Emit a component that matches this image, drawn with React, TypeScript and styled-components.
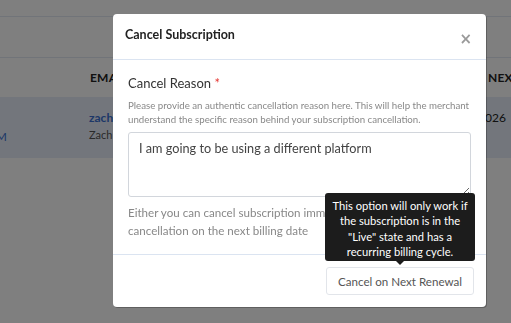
import React from 'react'
import styled, { createGlobalStyle } from 'styled-components'

const GlobalStyle = createGlobalStyle`
    html, body {
        margin: 0;
        padding: 0;
        width: 511px;
        height: 323px;
        overflow: hidden;
        background: #ffffff;
        font-family: Lato, "Open Sans", sans-serif;
    }
`

const Page = styled.div`
    width: 511px;
    height: 323px;
    overflow: hidden;
    display: flex;
    flex-direction: column;
`

const TopBar = styled.div`
    height: 16px;
    border-bottom: 1px solid #e3e9f2;
`

const Toolbar = styled.div`
    height: 40px;
    border-bottom: 1px solid #e3e9f2;
`

const Row = styled.div<{ $head?: boolean }>`
    display: grid;
    grid-template-columns: 150px 398px 200px;
    margin-left: -61px;
    height: ${p => p.$head ? '39px' : '61px'};
    align-items: ${p => p.$head ? 'center' : 'start'};
    background: ${p => p.$head ? '#ffffff' : '#e6edf8'};
`

const HeadCell = styled.div`
    font-size: 12px;
    font-weight: 700;
    color: #222;
    letter-spacing: 0.2px;
    padding-left: 1px;
`

const Cell = styled.div<{ $end?: string }>`
    padding-top: 13px;
    display: flex;
    flex-direction: column;
    gap: 3px;
    white-space: nowrap;
    align-items: ${p => p.$end ? 'flex-end' : 'flex-start'};
    width: ${p => p.$end ?? 'auto'};
`

const LinkText = styled.span<{ $plain?: boolean }>`
    font-size: 12px;
    font-weight: ${p => p.$plain ? 400 : 700};
    color: #3b6fd0;
`

const SubText = styled.span<{ $dark?: boolean }>`
    font-size: ${p => p.$dark ? '12px' : '11px'};
    color: ${p => p.$dark ? '#222' : '#555'};
`

const Overlay = styled.div`
    position: fixed;
    inset: 0;
    background: rgba(0, 0, 0, 0.5);
`

const Modal = styled.div`
    position: absolute;
    left: 113px;
    top: 14px;
    width: 373px;
    height: 293px;
    background: #fff;
    border-radius: 4px;
    box-shadow: 1px 1px 0 rgba(0, 0, 0, 0.25);
    display: flex;
    flex-direction: column;
`

const Header = styled.div`
    height: 45px;
    border-bottom: 1px solid #dbe4f1;
    display: flex;
    align-items: center;
    justify-content: space-between;
    padding: 0 14px 0 12px;
`

const Title = styled.h3`
    margin: 0 0 5px;
    font-size: 12.5px;
    font-weight: 700;
    color: #222;
`

const Close = styled.span`
    font-family: "DejaVu Sans", sans-serif;
    font-size: 15px;
    font-weight: 700;
    color: #9a9a9a;
    margin-top: 5px;
`

const Body = styled.div`
    padding: 14px 15px 0;
    flex: 1;
    border-bottom: 1px solid #dbe4f1;
`

const Label = styled.div`
    font-size: 13px;
    color: #333;
    line-height: 18px;
`

const Star = styled.span`
    color: #e53935;
`

const Help = styled.p`
    margin: 6px 0 6px;
    font-size: 9.7px;
    line-height: 14px;
    color: #888;
`

const Reason = styled.textarea`
    display: block;
    box-sizing: border-box;
    width: 343px;
    height: 65px;
    border: 1px solid #d2d6dc;
    border-radius: 3px;
    padding: 7px 10px;
    font-family: Lato, "Open Sans", sans-serif;
    font-size: 12.7px;
    color: #444;
    resize: vertical;
`

const Note = styled.p`
    margin: 7px 0 0;
    font-size: 11.6px;
    line-height: 18px;
    color: #888;
`

const Footer = styled.div`
    height: 52px;
    display: flex;
    justify-content: flex-end;
    align-items: flex-start;
    padding: 12px 12px 0;
    box-sizing: border-box;
`

const ButtonWrap = styled.div`
    position: relative;
    display: flex;
`

const Button = styled.button`
    height: 28px;
    padding: 0 11px;
    background: #fff;
    border: 1px solid #e2e5ea;
    border-radius: 3px;
    font-family: Lato, "Open Sans", sans-serif;
    font-size: 11.6px;
    color: #555;
`

const Tooltip = styled.div`
    position: absolute;
    bottom: calc(100% + 6px);
    left: 50%;
    transform: translateX(-50%);
    width: 150px;
    box-sizing: border-box;
    padding: 5px 6px 1px;
    background: #1c1c1c;
    border-radius: 3px;
    color: #fff;
    font-size: 11.2px;
    line-height: 15.6px;
    text-align: center;

    &::after {
        content: "";
        position: absolute;
        left: 50%;
        bottom: -4px;
        margin-left: -4px;
        border-left: 4px solid transparent;
        border-right: 4px solid transparent;
        border-top: 4px solid #1c1c1c;
    }
`

export default function App(): React.ReactElement {
    return <>
        <GlobalStyle />
        <Page>
            <TopBar />
            <Toolbar />
            <Row $head>
                <HeadCell></HeadCell>
                <HeadCell>EMAIL</HeadCell>
                <HeadCell>NEXT BILLING</HeadCell>
            </Row>
            <Row>
                <Cell $end="68px" style={{ paddingTop: 32 }}><LinkText $plain>10:20 AM</LinkText></Cell>
                <Cell>
                    <LinkText>zach.james@example.com</LinkText>
                    <SubText>Zach James</SubText>
                </Cell>
                <Cell $end="19px"><SubText $dark>Jan 12, 2026</SubText></Cell>
            </Row>
        </Page>
        <Overlay>
            <Modal>
                <Header>
                    <Title>Cancel Subscription</Title>
                    <Close>×</Close>
                </Header>
                <Body>
                    <Label>Cancel Reason <Star>*</Star></Label>
                    <Help>Please provide an authentic cancellation reason here. This will help the merchant understand the specific reason behind your subscription cancellation.</Help>
                    <Reason defaultValue="I am going to be using a different platform" />
                    <Note>Either you can cancel subscription immediately or schedule the cancellation on the next billing date</Note>
                </Body>
                <Footer>
                    <ButtonWrap>
                        <Tooltip>This option will only work if the subscription is in the "Live" state and has a recurring billing cycle.</Tooltip>
                        <Button>Cancel on Next Renewal</Button>
                    </ButtonWrap>
                </Footer>
            </Modal>
        </Overlay>
    </>
}
